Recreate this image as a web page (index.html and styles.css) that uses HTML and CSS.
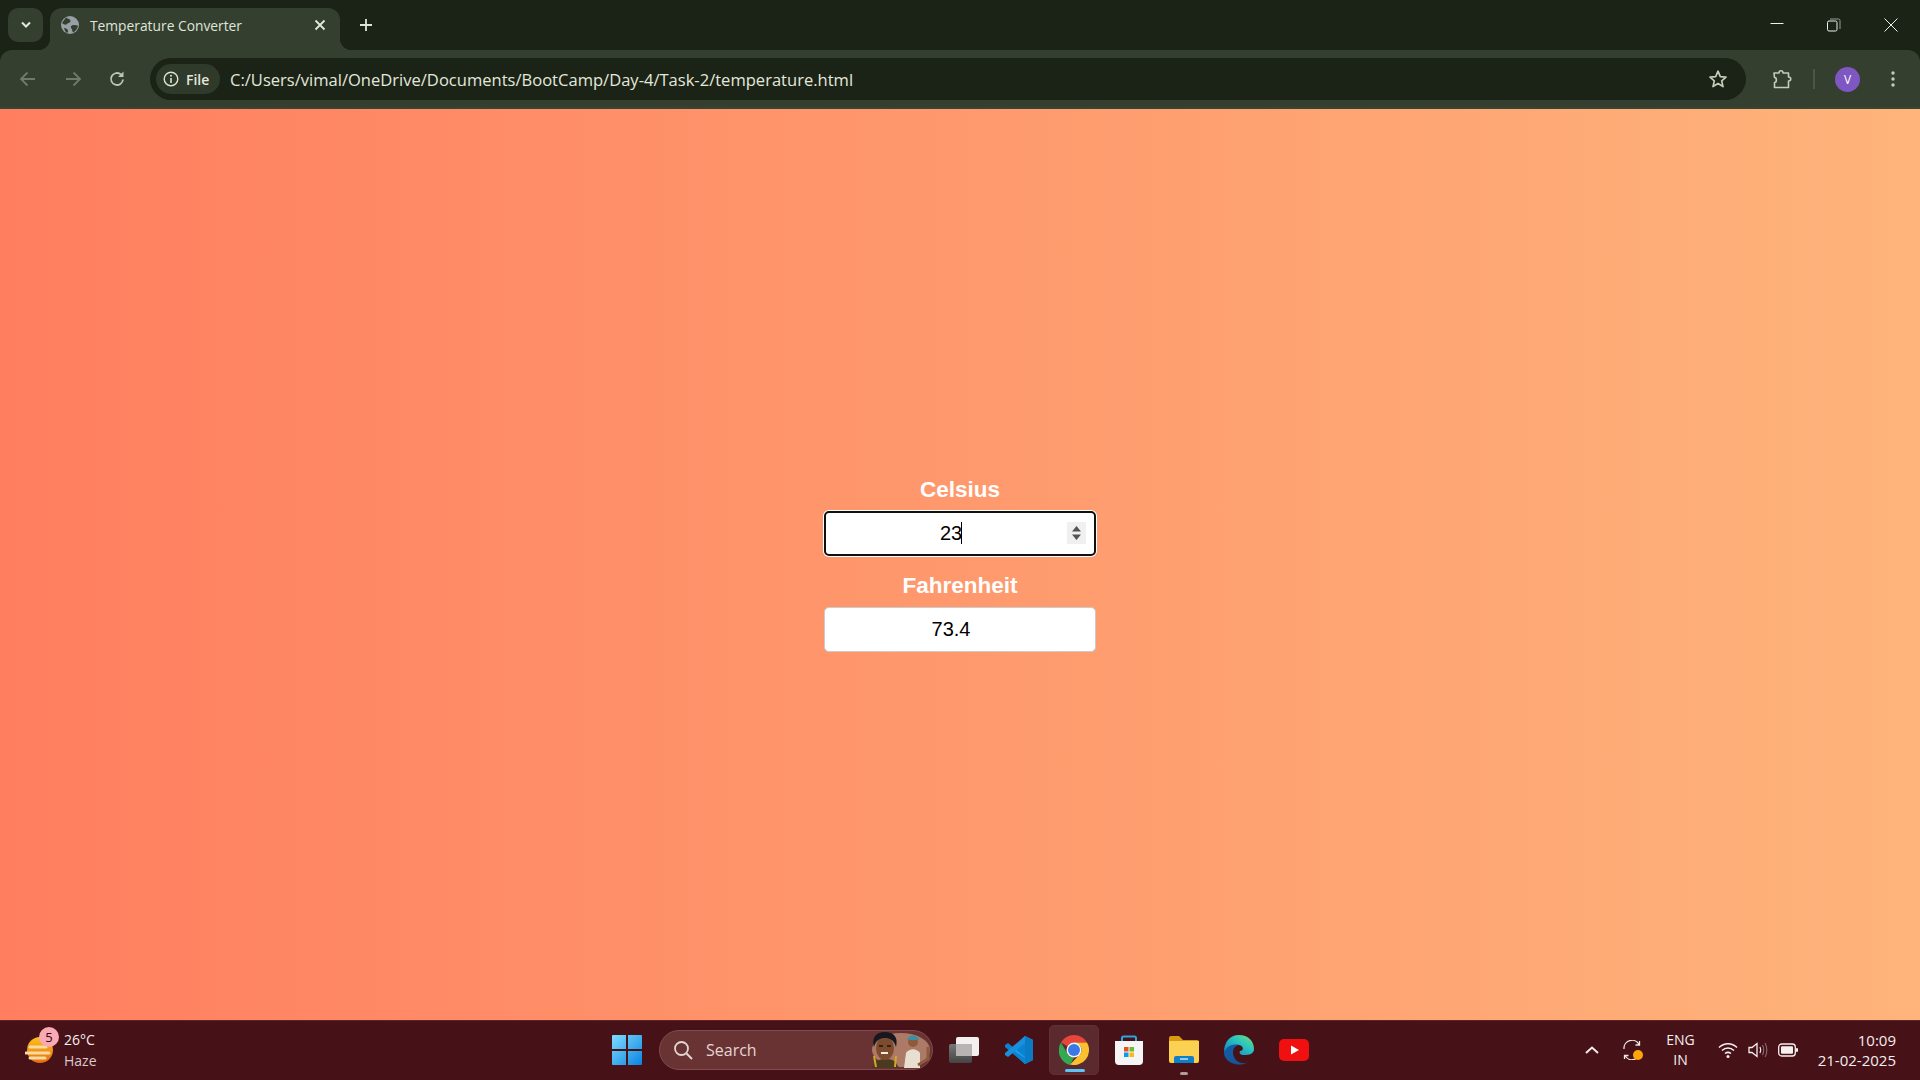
FILE: index.html
```html
<!DOCTYPE html>
<html lang="en">
<head>
    <meta charset="UTF-8">
    <title>Temperature Converter</title>
    <link rel="stylesheet" href="styles.css">
</head>
<body>
    <div class="tabstrip">
        <div class="tab-search">
            <svg width="12" height="8" viewBox="0 0 12 8"><path d="M2 1.5 6 5.5 10 1.5" fill="none" stroke="#e3e8dc" stroke-width="2"/></svg>
        </div>
        <div class="tab">
            <svg class="favicon" width="18" height="18" viewBox="0 0 18 18">
                <circle cx="9" cy="9" r="9" fill="#98a0a6"/>
                <path d="M5 1.5C7 3 9.500 3 9.500 5S7 6.500 6 8 3 8.500 1 7M11 9.500c2-1 4 0 6 0-.5 3-2 5.500-5 7-1-1-.5-3-1.500-4s-1-2.500.5-3ZM3 12c2 0 3.500 1 4 2.500S6 17 6 17C4.500 16 3.500 14 3 12Z" fill="#343f2f"/>
            </svg>
            <span class="tab-title">Temperature Converter</span>
            <svg class="tab-close" width="12" height="12" viewBox="0 0 12 12"><path d="M1.500 1.500 10.500 10.500M10.500 1.500 1.500 10.500" stroke="#e3e8dc" stroke-width="1.800"/></svg>
        </div>
        <svg class="new-tab" width="14" height="14" viewBox="0 0 14 14"><path d="M7 1V13M1 7H13" stroke="#dfe5d8" stroke-width="1.800"/></svg>
        <div class="window-controls">
            <svg width="14" height="14" viewBox="0 0 14 14"><path d="M0.500 5.500H13.500" stroke="#eef0ea"/></svg>
            <svg width="14" height="14" viewBox="0 0 14 14"><rect x="0.500" y="3" width="9.500" height="10" rx="1.500" fill="none" stroke="#eef0ea"/><path d="M3 1H11.500Q13 1 13 2.500V11" fill="none" stroke="#9aa094"/></svg>
            <svg width="14" height="14" viewBox="0 0 14 14"><path d="M0.500 0.500 13.500 13.500M13.500 0.500 0.500 13.500" stroke="#eef0ea"/></svg>
        </div>
    </div>

    <div class="toolbar">
        <svg class="nav-icon" width="18" height="16" viewBox="0 0 18 16"><path d="M16 8H2M8.500 1.500 2 8 8.500 14.500" fill="none" stroke="#6f7a69" stroke-width="1.800"/></svg>
        <svg class="nav-icon" width="18" height="16" viewBox="0 0 18 16"><path d="M2 8H16M9.500 1.500 16 8 9.500 14.500" fill="none" stroke="#6f7a69" stroke-width="1.800"/></svg>
        <svg class="nav-icon" width="18" height="18" viewBox="0 0 18 18"><path d="M15 9.500A6 6 0 1 1 13 4.500" fill="none" stroke="#bcc6b3" stroke-width="1.800"/><path d="M15.500 1.500V7H10Z" fill="#bcc6b3"/></svg>
        <div class="omnibox">
            <div class="file-chip">
                <svg width="16" height="16" viewBox="0 0 16 16"><circle cx="8" cy="8" r="6.800" fill="none" stroke="#dbe3d2" stroke-width="1.400"/><path d="M8 7V12" stroke="#dbe3d2" stroke-width="1.600"/><circle cx="8" cy="4.800" r="1" fill="#dbe3d2"/></svg>
                <span>File</span>
            </div>
            <span class="url">C:/Users/vimal/OneDrive/Documents/BootCamp/Day-4/Task-2/temperature.html</span>
            <svg class="star" width="20" height="20" viewBox="0 0 20 20"><path d="M10 2.200 12.300 7.600 18 8.100 13.700 11.900 15 17.600 10 14.600 5 17.600 6.300 11.900 2 8.100 7.700 7.600Z" fill="none" stroke="#c3cdb9" stroke-width="1.700" stroke-linejoin="round"/></svg>
        </div>
        <svg class="ext" width="20" height="20" viewBox="0 0 20 20"><path d="M2 4H7C7 1 11 1 11 4H16.500V8C19.500 8 19.500 12 16.500 12V18.500H2.500V13.500C5 13.500 5 8.500 2.500 8.500Z" fill="none" stroke="#c3cdb9" stroke-width="1.600" stroke-linejoin="round"/></svg>
        <div class="toolbar-sep"></div>
        <div class="avatar">V</div>
        <svg class="menu" width="4" height="18" viewBox="0 0 4 18"><circle cx="2" cy="3" r="1.700" fill="#c3cdb9"/><circle cx="2" cy="9" r="1.700" fill="#c3cdb9"/><circle cx="2" cy="15" r="1.700" fill="#c3cdb9"/></svg>
    </div>

    <main class="page">
        <label class="field-label" for="celsius">Celsius</label>
        <div class="field-wrap">
            <input class="field field-focus" type="number" id="celsius" value="23">
            <span class="caret"></span>
        </div>
        <label class="field-label" for="fahrenheit">Fahrenheit</label>
        <div class="field-wrap">
            <input class="field" type="number" id="fahrenheit" value="73.4">
        </div>
    </main>

    <footer class="taskbar">
        <div class="task-left">
            <div class="weather-icon">
                <svg width="28" height="28" viewBox="0 0 28 28">
                    <defs><linearGradient id="sun" x1="0" y1="0" x2="0" y2="1"><stop offset="0" stop-color="#fcc21b"/><stop offset="1" stop-color="#ea6a10"/></linearGradient></defs>
                    <circle cx="15" cy="14" r="13" fill="url(#sun)"/>
                    <path d="M5 11H21M1 17H24M5 22H20" stroke="#f6dca0" stroke-width="3" stroke-linecap="round"/>
                </svg>
                <span class="badge">5</span>
            </div>
            <div class="weather-text">
                <span>26°C</span>
                <span class="haze">Haze</span>
            </div>
        </div>

        <div class="task-center">
            <svg class="app" width="30" height="30" viewBox="0 0 30 30">
                <defs><linearGradient id="win" x1="0" y1="0" x2="1" y2="1"><stop offset="0" stop-color="#7fdcff"/><stop offset="1" stop-color="#0a84e0"/></linearGradient></defs>
                <path d="M1 0H14V14H0V1Q0 0 1 0ZM16 0H29Q30 0 30 1V14H16ZM0 16H14V30H1Q0 30 0 29ZM16 16H30V29Q30 30 29 30H16Z" fill="url(#win)"/>
            </svg>
            <div class="search">
                <svg width="20" height="20" viewBox="0 0 20 20"><circle cx="8.500" cy="8.500" r="6.500" fill="none" stroke="#e4d5d5" stroke-width="1.800"/><path d="M13.500 13.500 19 19" stroke="#e4d5d5" stroke-width="2"/></svg>
                <span>Search</span>
                <svg class="search-art" width="62" height="36" viewBox="0 0 62 36">
                    <ellipse cx="33" cy="18" rx="29" ry="17" fill="#c4937b" opacity=".75"/>
                    <path d="M4 36C6 29 10 27 18 27S28 30 31 36Z" fill="#4a3a20"/>
                    <ellipse cx="17" cy="16" rx="9" ry="12" fill="#7d4c2e"/>
                    <path d="M6 15C3 3 11 0 17 0S31 3 28 15C26 8 22 6 17 6S8 8 6 15Z" fill="#17171f"/>
                    <path d="M13 21H20" stroke="#f2eee4" stroke-width="2"/>
                    <path d="M11 14H15M19 14H23" stroke="#1c120c" stroke-width="1.500"/>
                    <path d="M6 24 8 35M28 24 27 35" stroke="#d3a91f" stroke-width="2"/>
                    <circle cx="45" cy="10" r="5" fill="#8d5a3c"/>
                    <path d="M39 8C41 2 49 2 51 8Z" fill="#3a8fa3"/>
                    <path d="M36 36 38 21C42 16 48 16 52 21L52 36Z" fill="#e9dfd0"/>
                    <path d="M50 33 60 27 60 15" fill="none" stroke="#8d5a3c" stroke-width="3"/>
                </svg>
            </div>
            <svg class="app" width="30" height="26" viewBox="0 0 30 26">
                <defs><linearGradient id="tv" x1="0" y1="0" x2="0" y2="1"><stop offset="0" stop-color="#777"/><stop offset="1" stop-color="#444"/></linearGradient></defs>
                <rect x="0" y="7" width="23" height="19" rx="2" fill="url(#tv)"/>
                <rect x="7" y="0" width="23" height="19" rx="2" fill="#f2f0f0"/>
                <rect x="7" y="7" width="16" height="12" fill="#b8b4b4"/>
            </svg>
            <svg class="app" width="30" height="30" viewBox="0 0 30 30">
                <path d="M21 1 29 5V25L21 29 7 16Z" fill="#1f9cf0"/>
                <path d="M21 1 29 5V25L21 29Z" fill="#0a7bc4"/>
                <path d="M21 8 10 16 21 23ZM1 10 4 8 21 22V29L1 12Z" fill="#0a84d0"/>
                <path d="M1 20 4 22 21 8V1L1 18Z" fill="#1a8fdc"/>
            </svg>
            <div class="app-active">
                <svg width="30" height="30" viewBox="0 0 30 30">
                    <path d="M15 0A15 15 0 0 1 28 7.500H15A7.500 7.500 0 0 0 8.500 11.300L2 7.500A15 15 0 0 1 15 0Z" fill="#e8453c"/>
                    <path d="M2 7.500 8.500 18.800A7.500 7.500 0 0 0 15 22.500L11 30A15 15 0 0 1 2 7.500Z" fill="#34a853"/>
                    <path d="M28 7.500A15 15 0 0 1 11 29.500L21.500 18.800A7.500 7.500 0 0 0 21.500 11.200L15 7.500Z" fill="#fbc02d"/>
                    <circle cx="15" cy="15" r="7.500" fill="#f4f4f4"/>
                    <circle cx="15" cy="15" r="6" fill="#3b78e7"/>
                </svg>
                <span class="running"></span>
            </div>
            <svg class="app" width="30" height="30" viewBox="0 0 30 30">
                <path d="M8 7V3Q8 1.500 9.500 1.500H20.500Q22 1.500 22 3V7" fill="none" stroke="#2aa6e0" stroke-width="2"/>
                <path d="M1 6H29V26Q29 30 25 30H5Q1 30 1 26Z" fill="#f5f5f5"/>
                <rect x="10" y="12" width="4.500" height="4.500" fill="#e8502a"/>
                <rect x="15.500" y="12" width="4.500" height="4.500" fill="#6dbb2e"/>
                <rect x="10" y="17.500" width="4.500" height="4.500" fill="#0d9be8"/>
                <rect x="15.500" y="17.500" width="4.500" height="4.500" fill="#fbb81d"/>
            </svg>
            <div class="app-open">
                <svg width="30" height="27" viewBox="0 0 30 27">
                    <path d="M0 2Q0 0 2 0H10L14 4H28Q30 4 30 6V10H0Z" fill="#d99b12"/>
                    <path d="M0 5H30V25Q30 27 28 27H2Q0 27 0 25Z" fill="#fbd154"/>
                    <path d="M5 22Q5 20 7 20H23Q25 20 25 22V27H5Z" fill="#0f80c8"/>
                    <path d="M11 23H19" stroke="#bde3f7" stroke-width="1.500"/>
                </svg>
                <span class="open-dot"></span>
            </div>
            <svg class="app" width="30" height="30" viewBox="0 0 30 30">
                <defs>
                    <linearGradient id="edge-a" x1="0" y1="1" x2="1" y2="0"><stop offset="0" stop-color="#0c7bc4"/><stop offset=".6" stop-color="#2cc6c0"/><stop offset="1" stop-color="#7ae06a"/></linearGradient>
                    <linearGradient id="edge-b" x1="0" y1="0" x2="1" y2="1"><stop offset="0" stop-color="#0d5fa8"/><stop offset="1" stop-color="#1d4f95"/></linearGradient>
                </defs>
                <path d="M15 0C24 0 30 6 30 14C30 19 25 20 20 20C16 20 15 18 16 16C20 16 20 11 15 10C9 9 4 12 0 17C0 7 6 0 15 0Z" fill="url(#edge-a)"/>
                <path d="M0 17C3 11 9 8 14 10C9 12 8 17 10 22C12 27 19 30 24 27C20 30 15 30 11 29C4 27 0 23 0 17Z" fill="url(#edge-b)"/>
            </svg>
            <svg class="app" width="30" height="22" viewBox="0 0 30 22">
                <rect width="30" height="22" rx="5" fill="#f01010"/>
                <path d="M12 6.500 20 11 12 15.500Z" fill="#fff"/>
            </svg>
        </div>

        <div class="task-right">
            <svg class="tray-chevron" width="14" height="8" viewBox="0 0 14 8"><path d="M1 7 7 1.500 13 7" fill="none" stroke="#f3ecec" stroke-width="2"/></svg>
            <div class="sync">
                <svg width="20" height="20" viewBox="0 0 20 20"><path d="M2 9A8 8 0 0 1 17 4.500M18 11A8 8 0 0 1 3 15.500M17.500 1V5H13.500M2.500 19V15.500H6.500" fill="none" stroke="#efe8e8" stroke-width="1.300"/></svg>
                <span class="sync-dot"></span>
            </div>
            <div class="lang"><span>ENG</span><span>IN</span></div>
            <div class="tray-icons">
                <svg width="20" height="16" viewBox="0 0 20 16"><path d="M1 5.500C6 .5 14 .5 19 5.500M4 8.500C7.500 5 12.500 5 16 8.500M7 11.500C9 10 11 10 13 11.500" fill="none" stroke="#f6f0f0" stroke-width="1.500"/><circle cx="10" cy="14.500" r="1.500" fill="#f6f0f0"/></svg>
                <svg width="20" height="18" viewBox="0 0 20 18"><path d="M1 6.500H4L9 2.500V15.500L4 11.500H1Z" fill="none" stroke="#f6f0f0" stroke-width="1.300"/><path d="M12 6C13 8 13 10 12 12" fill="none" stroke="#f6f0f0" stroke-width="1.200"/><path d="M14.500 4C16 7 16 11 14.500 14M17 2C19.500 6 19.500 12 17 16" fill="none" stroke="#8c6a6e" stroke-width="1.100"/></svg>
                <svg width="20" height="14" viewBox="0 0 20 14"><rect x="0.700" y="1" width="16.600" height="12" rx="3" fill="none" stroke="#f6f0f0" stroke-width="1.300"/><rect x="3" y="3.200" width="12" height="7.600" rx="1" fill="#f6f0f0"/><rect x="18" y="5" width="2" height="4" rx="1" fill="#f6f0f0"/></svg>
            </div>
            <div class="clock"><span>10:09</span><span>21-02-2025</span></div>
        </div>
    </footer>
</body>
</html>
```

FILE: styles.css
```css
* {
    box-sizing: border-box;
}
html, body {
    height: 100%;
}
body {
    margin: 0;
    display: flex;
    flex-direction: column;
    overflow: hidden;
    background-color: #1a2315;
    font-family: "Open Sans", "Noto Sans", sans-serif;
}

/* browser tabs */
.tabstrip {
    height: 50px;
    flex: none;
    display: flex;
    align-items: flex-start;
    padding: 8px 0 0 8px;
    background-color: #1a2315;
}
.tab-search {
    width: 35px;
    height: 34px;
    display: flex;
    align-items: center;
    justify-content: center;
    background-color: #343f2f;
    border-radius: 10px;
}
.tab {
    position: relative;
    width: 290px;
    height: 42px;
    margin-left: 7px;
    display: flex;
    align-items: center;
    padding: 0 14px 8px 11px;
    background-color: #343f2f;
    border-radius: 12px 12px 0 0;
}
.tab::before, .tab::after {
    content: "";
    position: absolute;
    bottom: 0;
    width: 12px;
    height: 12px;
}
.tab::before {
    left: -12px;
    background: radial-gradient(circle at 0 0, transparent 12px, #343f2f 12.5px);
}
.tab::after {
    right: -12px;
    background: radial-gradient(circle at 100% 0, transparent 12px, #343f2f 12.5px);
}
.favicon {
    flex: none;
}
.tab-title {
    margin-left: 11px;
    flex: 1;
    font-size: 13.8px;
    color: #dfe5d8;
    white-space: nowrap;
}
.new-tab {
    margin: 10px 0 0 19px;
}
.window-controls {
    margin-left: auto;
    margin-top: 10px;
    padding-right: 22px;
    display: flex;
    gap: 43px;
}

/* address bar */
.toolbar {
    height: 59px;
    flex: none;
    display: flex;
    align-items: center;
    padding: 1px 22px 0 19px;
    background-color: #343f2f;
    border-bottom: 2px solid #3a4435;
    border-radius: 12px 12px 0 0;
}
.nav-icon {
    flex: none;
    margin-right: 26.5px;
}
.nav-icon:nth-of-type(3) {
    margin-right: 24px;
}
.omnibox {
    width: 1596px;
    height: 42px;
    flex: none;
    display: flex;
    align-items: center;
    padding: 0 6px;
    background-color: #1b2316;
    border-radius: 21px;
}
.file-chip {
    width: 64px;
    height: 30px;
    display: flex;
    align-items: center;
    gap: 7px;
    padding-left: 7px;
    background-color: #2f3a2b;
    border-radius: 15px;
    font-size: 14px;
    font-weight: 600;
    color: #e3e8dc;
}
.url {
    margin-left: 10px;
    font-size: 16.56px;
    color: #e3e8dc;
    white-space: nowrap;
}
.star {
    margin-left: auto;
    margin-right: 12px;
}
.ext {
    margin-left: 26px;
    flex: none;
}
.toolbar-sep {
    width: 2px;
    height: 20px;
    margin-left: 21px;
    background-color: #4b5646;
}
.avatar {
    width: 25px;
    height: 25px;
    margin-left: 20px;
    flex: none;
    display: flex;
    align-items: center;
    justify-content: center;
    background-color: #7e57c2;
    border-radius: 50%;
    font-size: 12px;
    color: #fff;
}
.menu {
    margin-left: 31px;
    flex: none;
}

/* converter page */
.page {
    flex: 1;
    display: flex;
    flex-direction: column;
    align-items: center;
    justify-content: center;
    background: linear-gradient(to right, #ff7e5f, #feb47b);
    font-family: "Liberation Sans", Arial, sans-serif;
}
.field-label {
    display: block;
    height: 25px;
    margin-bottom: 9px;
    font-size: 22.5px;
    line-height: 25px;
    font-weight: bold;
    color: #fff;
}
.field-wrap {
    position: relative;
    margin-bottom: 17px;
}
.field-wrap:last-child {
    margin-bottom: 0;
}
.field {
    display: block;
    width: 272px;
    height: 45px;
    padding: 0 9px 0 10px;
    background-color: #fff;
    border: 1px solid #ccc;
    border-radius: 5px;
    font-family: inherit;
    font-size: 20px;
    text-align: center;
    color: #000;
    outline: none;
}
.field::-webkit-inner-spin-button {
    -webkit-appearance: none;
    width: 19px;
    height: 22px;
    opacity: 0;
}
.field-focus {
    padding: 0 8px 0 9px;
    border: 2px solid #101010;
    box-shadow: 0 0 0 1px #fff;
}
.field-focus::-webkit-inner-spin-button {
    opacity: 1;
    background: #f0f0f0 url("data:image/svg+xml,%3Csvg xmlns='http://www.w3.org/2000/svg' width='19' height='22'%3E%3Cpath d='M5 9.500 9.500 4 14 9.500ZM5 12.500H14L9.500 18Z' fill='%23555'/%3E%3C/svg%3E") no-repeat center;
}
.caret {
    position: absolute;
    left: 137px;
    top: 11px;
    width: 1px;
    height: 22px;
    background-color: #000;
}

/* windows taskbar */
.taskbar {
    height: 60px;
    flex: none;
    display: grid;
    grid-template-columns: 1fr auto 1fr;
    align-items: center;
    padding: 0 24px 2px 25px;
    background-color: #471118;
    border-top: 1px solid #5e2327;
    color: #f5eeee;
}
.task-left {
    display: flex;
    align-items: center;
    gap: 11px;
}
.weather-icon {
    position: relative;
    width: 28px;
    height: 28px;
}
.badge {
    position: absolute;
    top: -9px;
    right: -6px;
    width: 20px;
    height: 20px;
    display: flex;
    align-items: center;
    justify-content: center;
    background-color: #f9a8b4;
    border-radius: 50%;
    font-size: 13px;
    color: #2a0a10;
}
.weather-text {
    display: flex;
    flex-direction: column;
    font-size: 14px;
    line-height: 21px;
}
.haze {
    color: #d9c8ca;
}
.task-center {
    display: flex;
    align-items: center;
    gap: 25px;
}
.app {
    flex: none;
}
.search {
    width: 274px;
    height: 40px;
    margin: 0 -9px 0 -8px;
    display: flex;
    align-items: center;
    padding: 0 2px 0 13px;
    background-color: #6a3333;
    border: 1px solid #7e4c4c;
    border-radius: 20px;
    font-size: 16px;
    color: #e4d5d5;
}
.search span {
    margin-left: 13px;
}
.search-art {
    margin-left: auto;
}
.app-active {
    position: relative;
    width: 50px;
    height: 50px;
    margin: 0 -10px;
    display: flex;
    align-items: center;
    justify-content: center;
    background-color: #5a2a2e;
    border: 1px solid #632f34;
    border-radius: 5px;
}
.running {
    position: absolute;
    left: 15px;
    bottom: 2px;
    width: 20px;
    height: 3px;
    background-color: #5cc5f5;
    border-radius: 2px;
}
.app-open {
    position: relative;
    height: 27px;
}
.app-open svg {
    display: block;
}
.open-dot {
    position: absolute;
    left: 11px;
    bottom: -12px;
    width: 8px;
    height: 3px;
    background-color: #b39a9c;
    border-radius: 2px;
}
.task-right {
    display: flex;
    align-items: center;
    justify-content: flex-end;
    font-size: 14px;
}
.sync {
    position: relative;
    width: 20px;
    height: 20px;
    margin-left: 23px;
}
.sync svg {
    display: block;
}
.sync-dot {
    position: absolute;
    right: -1px;
    bottom: 0;
    width: 10px;
    height: 10px;
    background-color: #ffa50a;
    border-radius: 50%;
}
.lang {
    display: flex;
    flex-direction: column;
    align-items: center;
    margin-left: 24px;
    line-height: 20px;
}
.tray-icons {
    display: flex;
    align-items: center;
    gap: 10px;
    margin-left: 23px;
}
.clock {
    display: flex;
    flex-direction: column;
    align-items: flex-end;
    margin-left: 20px;
    font-size: 15px;
    line-height: 20px;
}
```
